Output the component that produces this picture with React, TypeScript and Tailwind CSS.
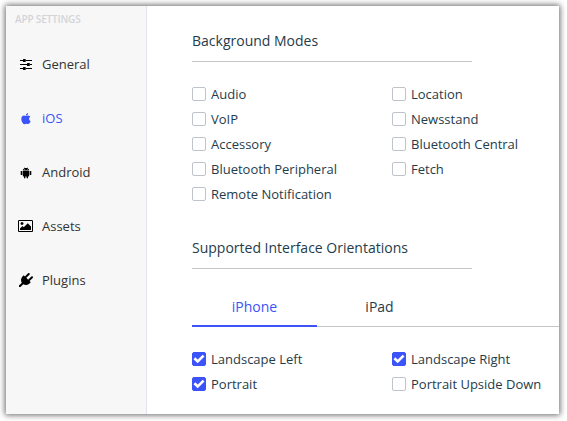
import type { ReactNode } from 'react';
import { useState } from 'react';

function SlidersIcon() {
  return (
    <svg className="mt-0.5" width="12" height="12" viewBox="0 0 12 12" fill="#000">
      <path d="M0 1h3v1H0zM5.7 1H12v1H5.7zM0 5h7v1H0zM10 5h2v1h-2zM0 9h3v1H0zM5.7 9H12v1H5.7z" />
      <rect x="3" width="2.7" height="3" rx=".5" />
      <rect x="7" y="4" width="2.8" height="3" rx=".5" />
      <rect x="3" y="8" width="2.7" height="3" rx=".5" />
    </svg>
  );
}

function AppleIcon() {
  return (
    <svg className="mt-px" width="12" height="12" viewBox="0 0 1792 1792" fill="#3d53fa">
      <path d="M1585 1215q-39 125-123 250-129 196-257 196-49 0-140-32-86-32-151-32-61 0-142 33-81 34-132 34-152 0-301-259-147-261-147-503 0-228 113-374 113-144 284-144 72 0 177 30 104 30 138 30 45 0 143-34 102-34 173-34 119 0 213 65 52 36 104 100-79 67-114 118-65 94-65 207 0 124 69 223t158 126zM1209 42q0 61-29 136-30 75-93 138-54 54-108 72-37 11-104 17 3-149 78-257 74-107 250-148 1 3 2.5 11t2.5 11q0 4 .5 10t.5 10z" />
    </svg>
  );
}

function AndroidIcon() {
  return (
    <svg className="mt-0.5 w-3" height="12" viewBox="-.5 0 12 12" fill="#000">
      <path d="M2.3 3.5C2.4 2.4 3 1.7 3.9 1.2L3.4.3l.2-.1.6.9c.8-.3 1.8-.3 2.6 0l.6-.9.2.1-.5.9c.9.5 1.5 1.2 1.6 2.3z" />
      <path d="M2.3 3.9h6.4v4.9c0 .5-.3.7-.7.7h-.5v1.3c0 1-1.4 1-1.4 0V9.5H4.9v1.3c0 1-1.4 1-1.4 0V9.5H3c-.4 0-.7-.2-.7-.7z" />
      <rect x=".2" y="3.9" width="1.6" height="4.2" rx=".7" />
      <rect x="9.2" y="3.9" width="1.6" height="4.2" rx=".7" />
      <path d="M3.9 2.1h.6v.6h-.6zM6.5 2.1h.6v.6h-.6z" fill="#f7f7f7" />
    </svg>
  );
}

function PictureIcon() {
  return (
    <svg className="mr-px" width="15" height="14" viewBox="0 0 1920 1792" fill="#000">
      <path d="M704 576q0 80-56 136t-136 56-136-56-56-136 56-136 136-56 136 56 56 136zM1664 960v448h-1408v-192l320-320 160 160 512-512zM1760 256h-1600q-13 0-22.5 9.5t-9.5 22.5v1216q0 13 9.5 22.5t22.5 9.5h1600q13 0 22.5-9.5t9.5-22.5v-1216q0-13-9.5-22.5t-22.5-9.5zM1920 288v1216q0 66-47 113t-113 47h-1600q-66 0-113-47t-47-113v-1216q0-66 47-113t113-47h1600q66 0 113 47t47 113z" />
    </svg>
  );
}

function PlugIcon() {
  return (
    <svg width="14" height="14" viewBox="0 0 1792 1792" fill="#000">
      <path d="M1755 453q37 38 37 90.5t-37 90.5l-401 400 150 150-160 160q-163 163-389.5 186.5t-411.5-100.5l-362 362h-181v-181l362-362q-124-185-100.5-411.5t186.5-389.5l160-160 150 150 400-401q38-37 91-37t90 37 37 90.5-37 90.5l-400 401 234 234 401-400q38-37 91-37t90 37z" />
    </svg>
  );
}

function NavItem({ icon, label, active = false }: { icon: ReactNode; label: string; active?: boolean }) {
  return (
    <a className={`flex h-[54px] items-center pl-3 ${active ? 'text-[#3d53fa]' : 'text-[#333]'}`}>
      <span className="flex w-4 shrink-0 justify-center">{icon}</span>
      <span className="ml-2 pt-0.5">{label}</span>
    </a>
  );
}

function Checkbox({ label, initial = false }: { label: string; initial?: boolean }) {
  const [checked, setChecked] = useState(initial);
  return (
    <label className="flex h-[25px] items-start whitespace-nowrap">
      <input type="checkbox" className="sr-only" checked={checked} onChange={() => setChecked(!checked)} />
      <span
        className={`mt-1.5 mr-[5px] flex size-3.5 shrink-0 items-center justify-center rounded-[2px] border ${
          checked ? 'border-[#3d53fa] bg-[#3d53fa]' : 'border-[#bfc3cb] bg-white'
        }`}
      >
        {checked && (
          <svg className="shrink-0" width="12" height="12" viewBox="0 0 12 12" fill="none" stroke="#fff" strokeWidth="2.6">
            <path d="M1.4 5.2 4.7 8.4l5.9-5.8" />
          </svg>
        )}
      </span>
      <span className="mt-1 leading-[19px]">{label}</span>
    </label>
  );
}

function Heading({ children }: { children: ReactNode }) {
  return <h2 className="h-[31px] w-[280px] border-b border-[#c5c5c5] text-sm leading-5">{children}</h2>;
}

export default function App() {
  return (
    <div className="h-[421px] w-[567px] overflow-hidden bg-white p-1.5 font-['Open_Sans','Noto_Sans',sans-serif] text-[13px] text-[#1f3c4a]">
      <div className="flex h-[408px] w-[553px] bg-white shadow-[0_0_6px_1px_rgba(0,0,0,0.6)]">
        <nav className="w-[141px] shrink-0 border-r border-[#e2e3f0] bg-[#f7f7f7]">
          <div className="h-[31px] pt-1.5 pl-[9px] text-[10px] leading-[14px] font-semibold tracking-[-0.17px] text-[#d2d4da]">
            APP SETTINGS
          </div>
          <NavItem icon={<SlidersIcon />} label="General" />
          <NavItem icon={<AppleIcon />} label="iOS" active />
          <NavItem icon={<AndroidIcon />} label="Android" />
          <NavItem icon={<PictureIcon />} label="Assets" />
          <NavItem icon={<PlugIcon />} label="Plugins" />
        </nav>
        <main className="flex-1 pt-[25px] pl-[45px]">
          <Heading>Background Modes</Heading>
          <div className="mt-[19px] grid grid-cols-[200px_1fr]">
            <Checkbox label="Audio" />
            <Checkbox label="Location" />
            <Checkbox label="VoIP" />
            <Checkbox label="Newsstand" />
            <Checkbox label="Accessory" />
            <Checkbox label="Bluetooth Central" />
            <Checkbox label="Bluetooth Peripheral" />
            <Checkbox label="Fetch" />
            <Checkbox label="Remote Notification" />
          </div>
          <div className="mt-8">
            <Heading>Supported Interface Orientations</Heading>
          </div>
          <div className="mt-[19px] flex h-[39px] border-b border-[#c5c5c5] text-sm leading-[38px]">
            <button className="h-[39px] w-[125px] border-b-2 border-[#3d53fa] text-[#3d53fa]">iPhone</button>
            <button className="h-[37px] w-[125px]">iPad</button>
          </div>
          <div className="mt-[19px] grid grid-cols-[200px_1fr]">
            <Checkbox label="Landscape Left" initial />
            <Checkbox label="Landscape Right" initial />
            <Checkbox label="Portrait" initial />
            <Checkbox label="Portrait Upside Down" />
          </div>
        </main>
      </div>
    </div>
  );
}
